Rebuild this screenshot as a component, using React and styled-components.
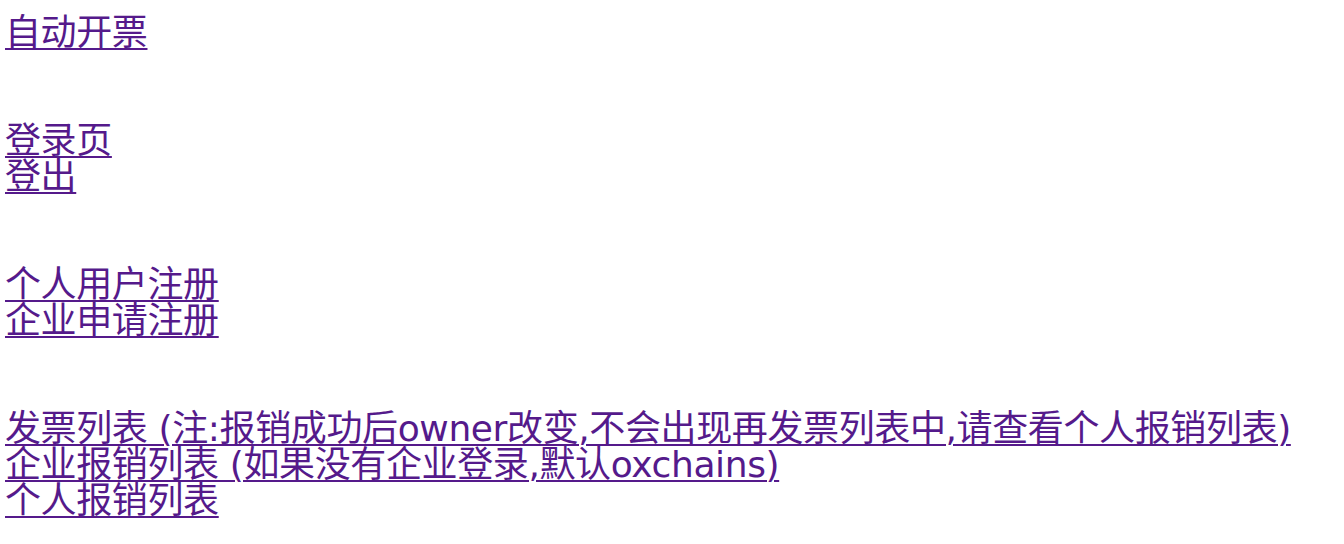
import React from "react";
import styled, { createGlobalStyle } from "styled-components";

const GlobalStyle = createGlobalStyle`
  body {
    margin: 0;
    background: #ffffff;
  }
`;

// Page column holding the link groups
const Page = styled.div`
  display: flex;
  flex-direction: column;
  gap: 72px;
  padding: 15px 5px 0;
  font-family: "DejaVu Sans", "Noto Sans CJK SC", sans-serif;
  font-size: 36px;
  line-height: 36px;
`;

const Group = styled.div`
  display: flex;
  flex-direction: column;
  align-items: flex-start;
`;

const NavLink = styled.a`
  color: #551a8b;
  text-decoration: underline;
  text-decoration-thickness: 2px;
  text-underline-offset: 3px;
  white-space: nowrap;
  letter-spacing: -0.38px;
`;

const groups = [
  ["自动开票"],
  ["登录页", "登出"],
  ["个人用户注册", "企业申请注册"],
  [
    "发票列表 (注:报销成功后owner改变,不会出现再发票列表中,请查看个人报销列表)",
    "企业报销列表 (如果没有企业登录,默认oxchains)",
    "个人报销列表",
  ],
];

const App = () => (
  <>
    <GlobalStyle />
    <Page>
      {groups.map((links, i) => (
        <Group key={i}>
          {links.map((label) => (
            <NavLink key={label} href="#">
              {label}
            </NavLink>
          ))}
        </Group>
      ))}
    </Page>
  </>
);

export default App;
